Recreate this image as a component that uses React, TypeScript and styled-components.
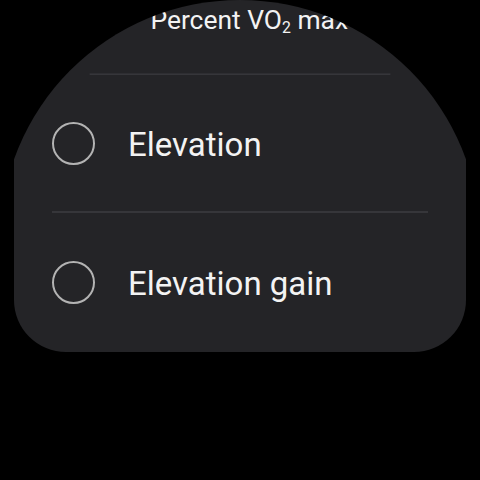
import styled, { createGlobalStyle } from "styled-components";

const GlobalStyle = createGlobalStyle`
  html, body {
    margin: 0;
    padding: 0;
    background: #000;
  }
  * {
    box-sizing: border-box;
  }
`;

const Screen = styled.div`
  width: 480px;
  height: 480px;
  border-radius: 50%;
  overflow: hidden;
  background: #000;
  padding: 0 14px;
  font-family: Roboto, "Noto Sans", sans-serif;
`;

const Card = styled.div`
  margin-top: -63px; /* list is scrolled, first item half off screen */
  background: #242427;
  border-radius: 0 0 52px 52px;
  display: flex;
  flex-direction: column;
`;

const Row = styled.div<{ $scale?: number; $last?: boolean }>`
  height: ${(p) => (p.$last ? 139 : 138)}px;
  display: flex;
  flex-direction: column;
  transform: scale(${(p) => p.$scale ?? 1});
  transform-origin: 50% 100%;
`;

const Item = styled.div`
  flex: 1;
  display: flex;
  align-items: center;
  gap: 33px;
  padding: 0 38px;
`;

const Radio = styled.span`
  width: 43px;
  height: 43px;
  flex: none;
  border-radius: 50%;
  border: 2.5px solid #b3b3b3;
`;

const Label = styled.span`
  color: #f3f3f3;
  font-size: 33px;
  line-height: 1;
  margin-top: 2px;

  sub {
    font-size: 0.6em;
    vertical-align: -0.25em;
    line-height: 0;
  }
`;

const Divider = styled.div`
  height: 2px;
  margin: 0 38px 0 38px;
  background: #36363a;
`;

const options = [
  { label: <>Percent VO<sub>2</sub> max</>, scale: 0.8 },
  { label: <>Elevation</>, scale: 1 },
  { label: <>Elevation gain</>, scale: 1 },
];

export default function App() {
  return (
    <>
      <GlobalStyle />
      <Screen>
        <Card>
          {options.map((o, i) => {
            const last = i === options.length - 1;
            return (
              <Row key={i} $scale={o.scale} $last={last}>
                <Item>
                  <Radio />
                  <Label>{o.label}</Label>
                </Item>
                {!last && <Divider />}
              </Row>
            );
          })}
        </Card>
      </Screen>
    </>
  );
}
